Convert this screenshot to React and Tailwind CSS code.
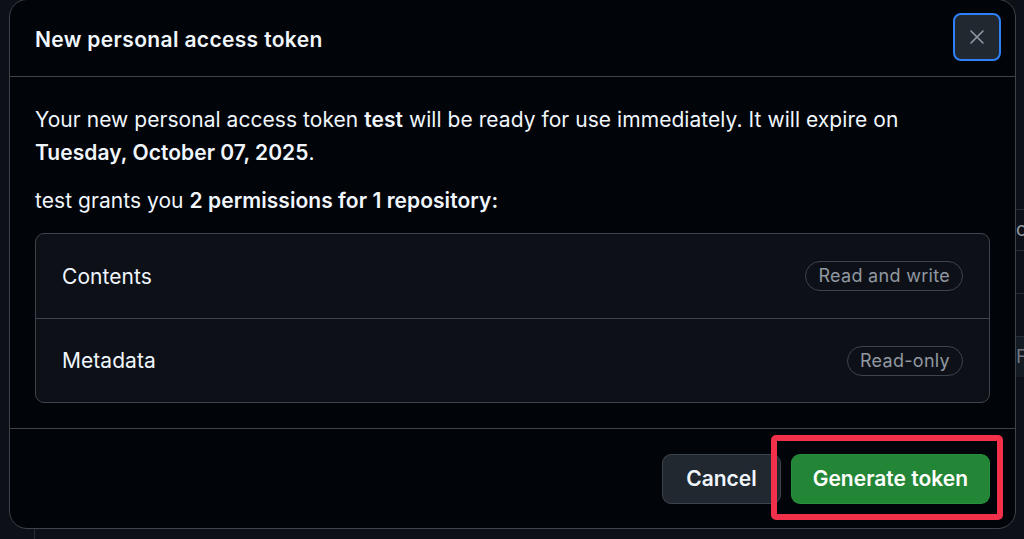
import React from "react";
import { X } from "lucide-react";

const permissions = [
  { name: "Contents", access: "Read and write" },
  { name: "Metadata", access: "Read-only" },
];

function AccessBadge({ children }) {
  return (
    <span className="rounded-full border border-[#3d444d] px-[12px] py-[2px] text-[18px] leading-[24px] tracking-[0.3px] text-[#9198a1]">
      {children}
    </span>
  );
}

export default function App() {
  return (
    <div
      className="relative h-[539px] w-[1024px] overflow-hidden bg-[#0d1117] text-[#f0f6fc]"
      style={{ fontFamily: "Inter, 'Noto Sans', 'Liberation Sans', sans-serif" }}
    >
      {/* page behind the dialog */}
      <div className="flex h-full">
        <div className="w-[35px] border-r border-[#262c36]" />
        <div className="flex-1" />
        <div className="w-[8px] overflow-hidden pt-[209px]">
          <div className="h-[42px] border-y border-[#262c36] text-[19px] leading-[40px] text-[#9198a1]">c</div>
          <div className="h-[43px] border-b border-[#262c36]" />
          <div className="h-[43px] border-b border-[#262c36]" />
          <div className="h-[40px] bg-[#151b23] text-[19px] leading-[40px] text-[#6e7681]">F</div>
        </div>
      </div>

      {/* dialog */}
      <div className="absolute left-[9px] top-[-1px] flex h-[530px] w-[1007px] flex-col rounded-[18px] border border-[#3d444d] bg-[#010409]">
        <div className="flex h-[77px] items-center justify-between border-b border-[#3d444d] pl-[25px] pr-[14px]">
          <h1 className="mt-[4px] text-[21px] font-semibold tracking-[0.35px]">New personal access token</h1>
          <button className="mb-[2px] grid h-[48px] w-[48px] place-items-center rounded-[8px] border-2 border-[#2f81f7] bg-[#212830] text-[#9198a1]">
            <X size={24} strokeWidth={1.6} />
          </button>
        </div>

        <div className="flex-1 px-[25px] pt-[26px] text-[21px] leading-[33px] tracking-[0.05px]">
          <p>
            Your new personal access token <strong className="font-semibold">test</strong> will be ready for use
            immediately. It will expire on <strong className="font-semibold">Tuesday, October 07, 2025</strong>.
          </p>
          <p className="mt-[15px]">
            test grants you <strong className="font-semibold">2 permissions for 1 repository:</strong>
          </p>
          <div className="mt-[16px] rounded-[9px] border border-[#3d444d] bg-[#0d1117]">
            {permissions.map((p, i) => (
              <div
                key={p.name}
                className={`flex h-[84px] items-center justify-between pl-[26px] pr-[26px] ${i > 0 ? "border-t border-[#3d444d]" : ""}`}
              >
                <span className="text-[21px]">{p.name}</span>
                <AccessBadge>{p.access}</AccessBadge>
              </div>
            ))}
          </div>
        </div>

        <div className="flex h-[100px] items-center justify-end gap-[10px] border-t border-[#3d444d] pr-[25px]">
          <button className="h-[50px] rounded-[9px] border border-[#3d444d] bg-[#212830] px-[23px] text-[21px] font-semibold">
            Cancel
          </button>
          <div className="relative">
            <button className="h-[50px] rounded-[9px] border border-[#2ea043]/40 bg-[#238636] px-[21px] text-[21px] font-semibold text-white">
              Generate token
            </button>
            {/* red highlight annotation */}
            <span className="pointer-events-none absolute bottom-[-16px] left-[-20px] right-[-13px] top-[-19px] rounded-[5px] border-[6px] border-[#f2304a]" />
          </div>
        </div>
      </div>
    </div>
  );
}
